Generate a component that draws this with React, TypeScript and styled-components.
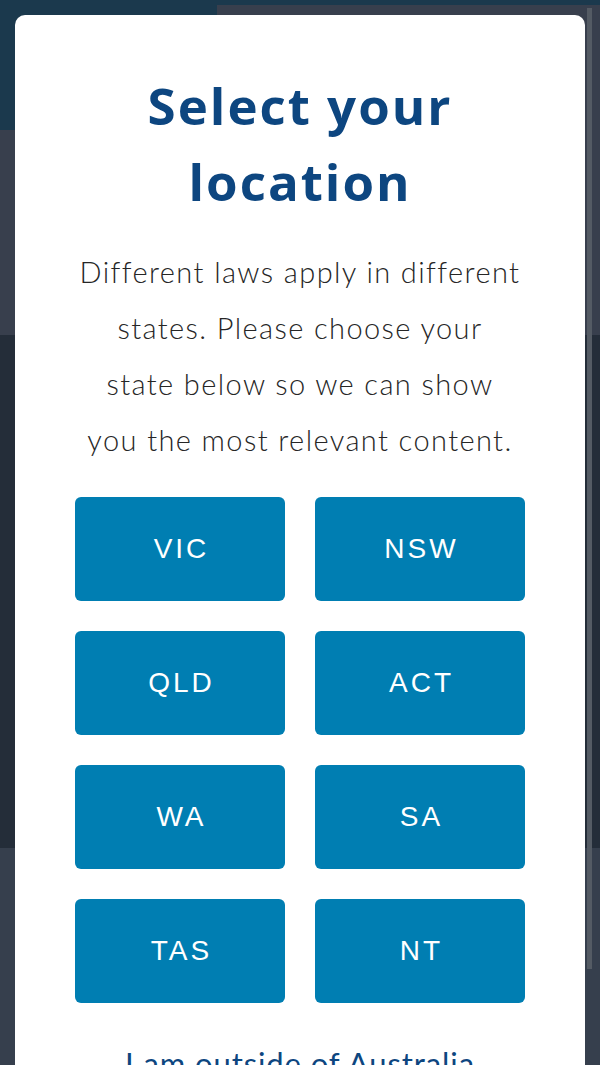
import styled, { createGlobalStyle } from 'styled-components';

const GlobalStyle = createGlobalStyle`
  html, body {
    margin: 0;
    padding: 0;
    height: 100%;
    overflow: hidden;
  }
  body {
    font-family: 'Lato', 'Liberation Sans', sans-serif;
  }
`

const Backdrop = styled.div`
  display: flex;
  flex-direction: column;
  height: 1065px;
  background: #363e4b;
`

const TopBar = styled.header`
  display: flex;
  height: 130px;
  padding-top: 5px;
  box-sizing: border-box;
  background: #1b394d;
`

const TopPanel = styled.div`
  flex: 1;
  margin-left: 217px;
  background: #383f4d;
`

const Band = styled.section<{ $h: number; $bg: string }>`
  height: ${p => p.$h}px;
  background: ${p => p.$bg};
`

const ScrollThumb = styled.div`
  position: fixed;
  top: 8px;
  left: 587px;
  width: 5px;
  height: 961px;
  background: #545b64;
`

const Modal = styled.div`
  position: fixed;
  top: 15px;
  left: 15px;
  width: 570px;
  height: 1100px;
  box-sizing: border-box;
  padding: 52px 60px 0;
  background: #ffffff;
  border-radius: 10px;
  display: flex;
  flex-direction: column;
  align-items: center;
`

const Title = styled.h1`
  margin: 0;
  font-family: 'Open Sans', 'Lato', sans-serif;
  font-weight: 700;
  font-size: 51px;
  line-height: 76px;
  letter-spacing: 2px;
  color: #0d4680;
  text-align: center;
  max-width: 340px;
`

const Intro = styled.p`
  margin: 25px 0 0;
  font-family: 'Lato', sans-serif;
  font-weight: 300;
  font-size: 29px;
  line-height: 56px;
  letter-spacing: 1.4px;
  color: #262626;
  text-align: center;
  white-space: nowrap;
`

const StateGrid = styled.div`
  display: grid;
  grid-template-columns: 210px 210px;
  grid-auto-rows: 104px;
  column-gap: 30px;
  row-gap: 30px;
  margin-top: 29px;
`

const StateButton = styled.button`
  display: flex;
  align-items: center;
  justify-content: center;
  padding: 0;
  border: none;
  border-radius: 6px;
  background: #007eb2;
  color: #ffffff;
  font-family: 'Liberation Sans', Arial, sans-serif;
  font-size: 28px;
  letter-spacing: 3px;
  text-indent: 3px;
  cursor: pointer;
`

const OutsideLink = styled.a`
  margin-top: 42px;
  font-family: 'Lato', sans-serif;
  font-size: 31px;
  line-height: 36px;
  letter-spacing: 0.9px;
  color: #0d4680;
  text-decoration: none;
`

const states = ['VIC', 'NSW', 'QLD', 'ACT', 'WA', 'SA', 'TAS', 'NT'];

export default function App() {
  return (
    <>
      <GlobalStyle />
      <Backdrop>
        <TopBar>
          <TopPanel />
        </TopBar>
        <Band $h={205} $bg="#383f4d" />
        <Band $h={513} $bg="#242d39" />
        <Band $h={217} $bg="#363f4d" />
      </Backdrop>
      <ScrollThumb />
      <Modal>
        <Title>Select your location</Title>
        <Intro>
          Different laws apply in different
          <br />
          states. Please choose your
          <br />
          state below so we can show
          <br />
          you the most relevant content.
        </Intro>
        <StateGrid>
          {states.map(s => (
            <StateButton key={s}>{s}</StateButton>
          ))}
        </StateGrid>
        <OutsideLink href="#">I am outside of Australia</OutsideLink>
      </Modal>
    </>
  );
}
